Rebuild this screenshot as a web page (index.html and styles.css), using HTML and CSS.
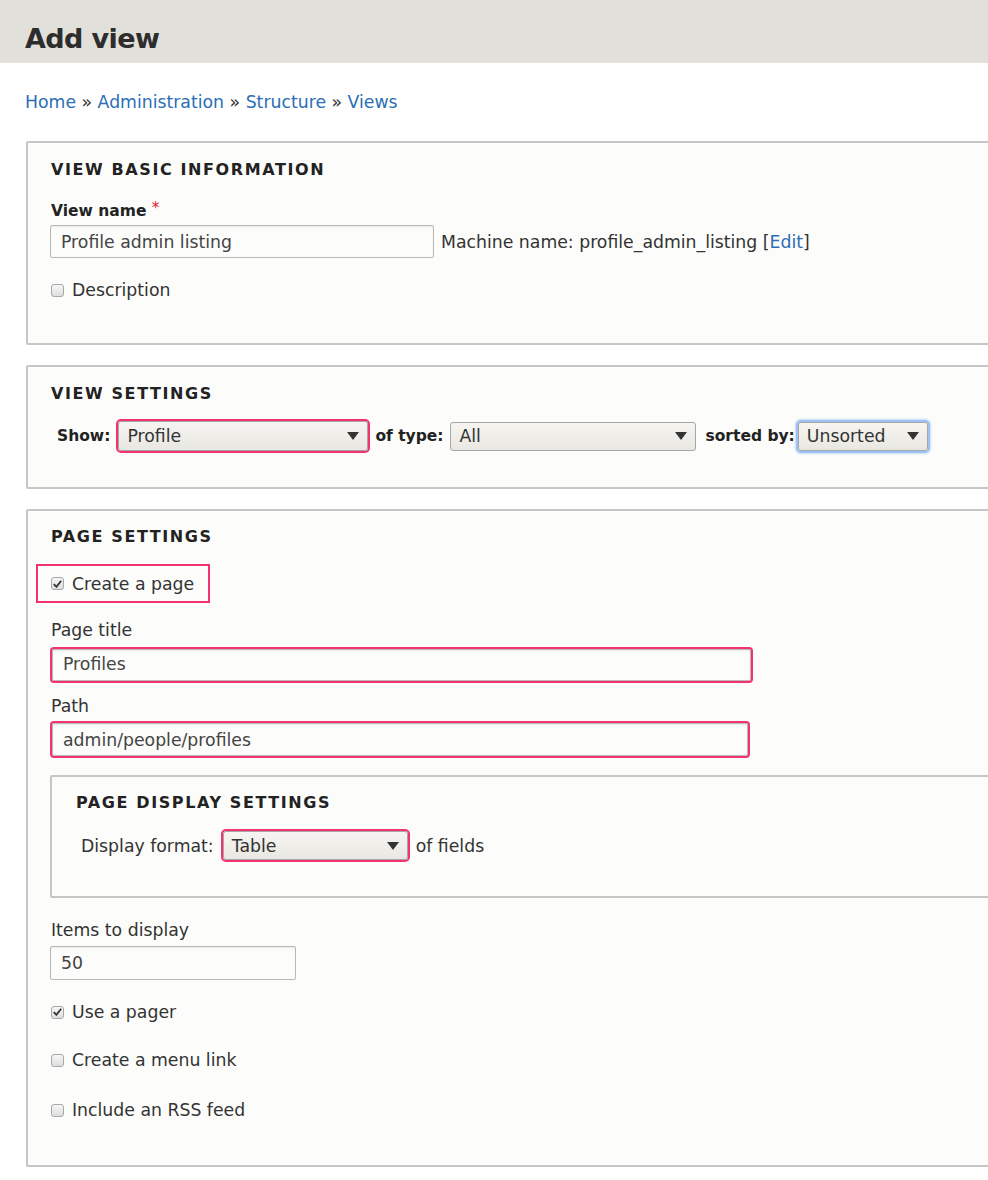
FILE: index.html
```html
<!DOCTYPE html>
<html lang="en">
<head>
<meta charset="utf-8">
<title>Add view</title>
<link rel="stylesheet" href="styles.css">
</head>
<body>
<header class="page-header">
  <h1 class="page-title">Add view</h1>
</header>
<main class="content">
  <nav class="breadcrumb">
    <a href="#">Home</a> » <a href="#">Administration</a> » <a href="#">Structure</a> » <a href="#">Views</a>
  </nav>

  <section class="fieldset fs-basic">
    <div class="legend">VIEW BASIC INFORMATION</div>
    <div class="label-bold label-name">View name <span class="req">*</span></div>
    <div class="name-row">
      <div class="text-input input-name">Profile admin listing</div>
      <span class="machine">Machine name: profile_admin_listing [<a href="#">Edit</a>]</span>
    </div>
    <div class="check-row row-desc">
      <span class="checkbox"></span>
      <span class="check-label">Description</span>
    </div>
  </section>

  <section class="fieldset fs-view">
    <div class="legend">VIEW SETTINGS</div>
    <div class="show-row">
      <span class="label-bold">Show:</span>
      <div class="select sel-show hl"><span>Profile</span><svg class="arrow" width="12" height="8" viewBox="0 0 12 8"><path d="M0 0H12L6 8Z"/></svg></div>
      <span class="label-bold">of type:</span>
      <div class="select sel-type"><span>All</span><svg class="arrow" width="12" height="8" viewBox="0 0 12 8"><path d="M0 0H12L6 8Z"/></svg></div>
      <span class="label-bold">sorted by:</span>
      <div class="select sel-sort focus"><span>Unsorted</span><svg class="arrow" width="12" height="8" viewBox="0 0 12 8"><path d="M0 0H12L6 8Z"/></svg></div>
    </div>
  </section>

  <section class="fieldset fs-page">
    <div class="legend">PAGE SETTINGS</div>
    <div class="create-box">
      <span class="checkbox checked"><svg width="9" height="8" viewBox="0 0 9 8"><path d="M0.8 4.2L3.4 6.8L8.2 0.8" fill="none" stroke="#333" stroke-width="1.8"/></svg></span>
      <span class="check-label">Create a page</span>
    </div>
    <div class="label-normal label-ptitle">Page title</div>
    <div class="text-input input-ptitle hl">Profiles</div>
    <div class="label-normal label-path">Path</div>
    <div class="text-input input-path hl">admin/people/profiles</div>

    <section class="fieldset fs-display">
      <div class="legend">PAGE DISPLAY SETTINGS</div>
      <div class="display-row">
        <span class="label-normal">Display format:</span>
        <div class="select sel-format hl"><span>Table</span><svg class="arrow" width="12" height="8" viewBox="0 0 12 8"><path d="M0 0H12L6 8Z"/></svg></div>
        <span class="label-normal">of fields</span>
      </div>
    </section>

    <div class="label-normal label-items">Items to display</div>
    <div class="text-input input-items">50</div>
    <div class="check-row row-pager">
      <span class="checkbox checked"><svg width="9" height="8" viewBox="0 0 9 8"><path d="M0.8 4.2L3.4 6.8L8.2 0.8" fill="none" stroke="#333" stroke-width="1.8"/></svg></span>
      <span class="check-label">Use a pager</span>
    </div>
    <div class="check-row row-menu">
      <span class="checkbox"></span>
      <span class="check-label">Create a menu link</span>
    </div>
    <div class="check-row row-rss">
      <span class="checkbox"></span>
      <span class="check-label">Include an RSS feed</span>
    </div>
  </section>
</main>
</body>
</html>
```

FILE: styles.css
```css
html {
  overflow: hidden;
}
body {
  margin: 0;
  background: #ffffff;
  color: #333333;
  font-family: "DejaVu Sans", Verdana, sans-serif;
  font-size: 17.3px;
  line-height: 24px;
}
a {
  color: #2b6eb5;
  text-decoration: none;
}

.page-header {
  height: 63px;
  box-sizing: border-box;
  background: #e1e0da;
  padding: 22px 25px 0;
}
.page-title {
  margin: 0;
  font-size: 27px;
  line-height: 34px;
  font-weight: bold;
  letter-spacing: -0.6px;
  color: #2d2d2d;
}

.content {
  padding-left: 26px;
  margin-right: -60px;
}
.breadcrumb {
  margin: 27px 0 0 -1px;
  line-height: 24px;
  color: #333;
}

.fieldset {
  background: #fcfcfa;
  border: 2px solid #c6c6c6;
  border-radius: 2px;
  padding: 16px 0 0 23px;
  margin-top: 20px;
}
.fs-basic {
  margin-top: 27px;
  padding-top: 17px;
  padding-bottom: 41px;
}
.fs-view {
  padding-top: 17px;
  padding-bottom: 36px;
}
.fs-page {
  padding-bottom: 43px;
}
.legend {
  font-size: 16px;
  line-height: 20px;
  font-weight: bold;
  letter-spacing: 1.6px;
  color: #222;
}

.label-bold {
  font-weight: bold;
  font-size: 15.5px;
  color: #222;
}
.label-normal {
  color: #333;
}
.label-name {
  margin-top: 21px;
  line-height: 20px;
}
.req {
  color: #e0262c;
  font-weight: normal;
  position: relative;
  top: -3px;
}

.name-row {
  margin-top: 4px;
  display: flex;
  align-items: center;
  gap: 7px;
}
.text-input {
  box-sizing: border-box;
  border: 1px solid #b9b9b9;
  border-radius: 2px;
  background: #fcfcfa;
  box-shadow: inset 0 1px 2px rgba(0, 0, 0, 0.08);
  padding: 0 10px;
  color: #444;
  display: flex;
  align-items: center;
}
.input-name {
  width: 384px;
  height: 33px;
  margin-left: -1px;
}
.machine {
  color: #333;
}

.check-row {
  display: flex;
  align-items: center;
  gap: 8px;
}
.checkbox {
  width: 13px;
  height: 13px;
  box-sizing: border-box;
  border: 1px solid #a8a8a8;
  border-radius: 3px;
  background: linear-gradient(#f6f6f6, #dedede);
  display: flex;
  align-items: center;
  justify-content: center;
  flex: none;
}
.row-desc {
  margin-top: 20px;
}

.show-row {
  margin-top: 17px;
  display: flex;
  align-items: center;
  padding-left: 6px;
  height: 30px;
}
.select {
  box-sizing: border-box;
  height: 30px;
  border: 1px solid #a6a6a6;
  border-radius: 3px;
  background: linear-gradient(#f6f5f1, #e8e7e1);
  display: flex;
  align-items: center;
  justify-content: space-between;
  padding: 0 8px 0 8px;
  color: #333;
}
.arrow {
  fill: #333;
  flex: none;
}
.hl {
  outline: 2px solid #f2336d;
  outline-offset: 0;
}
.focus {
  box-shadow: 0 0 0 2px #9dc1f4, 0 0 2px 3px #c9dcf8;
}
.sel-show {
  width: 250px;
  margin: 0 7px 0 8px;
}
.sel-type {
  width: 246px;
  height: 29px;
  margin: 0 9px 0 7px;
}
.sel-sort {
  width: 130px;
  height: 29px;
  margin-left: 3px;
}

.create-box {
  margin-top: 17px;
  margin-left: -15px;
  width: 174px;
  height: 39px;
  box-sizing: border-box;
  border: 2px solid #f2336d;
  display: flex;
  align-items: center;
  gap: 8px;
  padding-left: 13px;
}
.label-ptitle {
  margin-top: 15px;
}
.input-ptitle {
  width: 699px;
  height: 32px;
  margin-top: 7px;
  margin-left: 1px;
  padding-bottom: 3px;
}
.label-path {
  margin-top: 13px;
}
.input-path {
  width: 696px;
  height: 33px;
  margin-top: 5px;
  margin-left: 1px;
}

.fs-display {
  margin-top: 19px;
  margin-left: -1px;
  padding-left: 24px;
  padding-bottom: 36px;
}
.display-row {
  margin-top: 18px;
  display: flex;
  align-items: center;
  height: 29px;
  padding-left: 5px;
}
.sel-format {
  width: 185px;
  height: 29px;
  margin: 0 8px 0 9px;
}

.label-items {
  margin-top: 20px;
}
.input-items {
  width: 246px;
  height: 34px;
  margin-top: 4px;
  margin-left: -1px;
}
.row-pager {
  margin-top: 20px;
}
.row-menu {
  margin-top: 24px;
}
.row-rss {
  margin-top: 26px;
}
```
